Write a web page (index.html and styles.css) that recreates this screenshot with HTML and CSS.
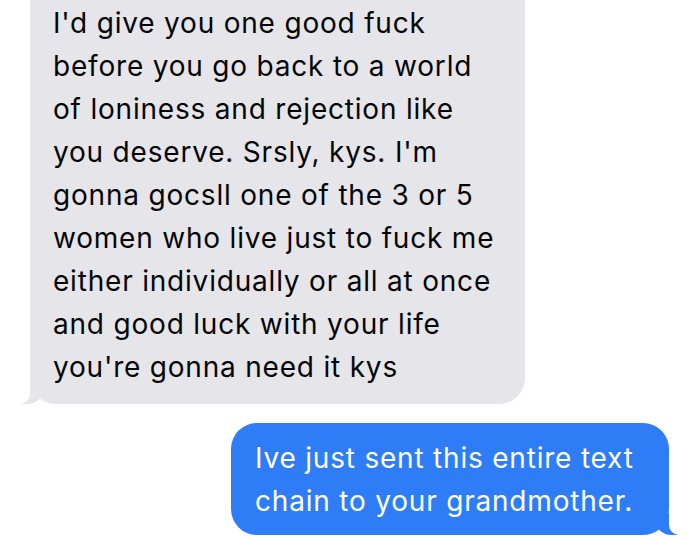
FILE: index.html
```html
<!DOCTYPE html>
<html>
<head>
<meta charset="utf-8">
<link rel="stylesheet" href="styles.css">
</head>
<body>
<div class="chat">
  <div class="msg in">I'd give you one good fuck<br>before you go back to a world<br>of loniness and rejection like<br>you deserve. Srsly, kys. I'm<br>gonna gocsll one of the 3 or 5<br>women who live just to fuck me<br>either individually or all at once<br>and good luck with your life<br>you're gonna need it kys</div>
  <div class="msg out">Ive just sent this entire text<br>chain to your grandmother.</div>
</div>
</body>
</html>
```
FILE: styles.css
```css
html, body {
  margin: 0;
  padding: 0;
  background: #ffffff;
  overflow: hidden;
}
.chat {
  width: 700px;
  height: 540px;
  display: flex;
  flex-direction: column;
  gap: 19px;
  font-family: Inter, "Liberation Sans", sans-serif;
  font-size: 28px;
  letter-spacing: 0.8px;
  line-height: 43px;
}
.msg {
  position: relative;
  border-radius: 26px;
  box-sizing: border-box;
  white-space: nowrap;
}
.in {
  align-self: flex-start;
  margin-left: 30px;
  margin-top: -30px;
  width: 495px;
  padding: 32px 10px 15px 23px;
  background: #e5e5ea;
  color: #050505;
}
.out {
  align-self: flex-end;
  margin-right: 31px;
  width: 438px;
  padding: 14px 10px 12px 24px;
  background: #2e7cf6;
  color: #ffffff;
}
.in::before {
  content: "";
  position: absolute;
  bottom: 0;
  left: -8px;
  width: 22px;
  height: 22px;
  background: #e5e5ea;
  border-bottom-right-radius: 16px;
}
.in::after {
  content: "";
  position: absolute;
  bottom: 0;
  left: -10px;
  width: 10px;
  height: 22px;
  background: #ffffff;
  border-bottom-right-radius: 10px;
}
.out::before {
  content: "";
  position: absolute;
  bottom: 0;
  right: -8px;
  width: 22px;
  height: 22px;
  background: #2e7cf6;
  border-bottom-left-radius: 16px;
}
.out::after {
  content: "";
  position: absolute;
  bottom: 0;
  right: -11px;
  width: 11px;
  height: 22px;
  background: #ffffff;
  border-bottom-left-radius: 10px;
}
```
